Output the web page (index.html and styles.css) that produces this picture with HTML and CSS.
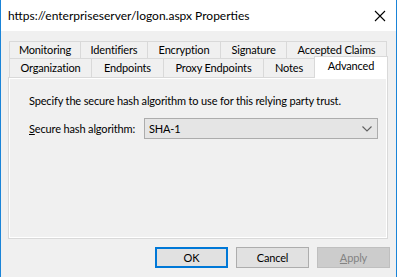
FILE: index.html
```html
<!DOCTYPE html>
<html lang="en">
<head>
  <meta charset="UTF-8">
  <meta name="viewport" content="width=device-width, initial-scale=1.0">
  <title>Properties</title>
  <link rel="stylesheet" href="styles.css">
</head>
<body>
  <div class="dialog">
    <header class="titlebar">
      <span class="title">https://enterpriseserver/logon.aspx Properties</span>
      <button class="close" aria-label="Close">
        <svg width="12" height="12" viewBox="0 0 12 12">
          <path d="M1 1 L11 11 M11 1 L1 11" stroke="#000" stroke-width="1.1" fill="none"/>
        </svg>
      </button>
    </header>

    <div class="content">
      <div class="tabs">
        <div class="tab-row back">
          <div class="tab tab-monitoring">Monitoring</div>
          <div class="tab tab-identifiers">Identifiers</div>
          <div class="tab tab-encryption">Encryption</div>
          <div class="tab tab-signature">Signature</div>
          <div class="tab tab-claims">Accepted Claims</div>
        </div>
        <div class="tab-row front">
          <div class="tab tab-organization">Organization</div>
          <div class="tab tab-endpoints">Endpoints</div>
          <div class="tab tab-proxy">Proxy Endpoints</div>
          <div class="tab tab-notes">Notes</div>
          <div class="tab tab-advanced active">Advanced</div>
        </div>
      </div>

      <div class="panel">
        <p class="hint">Specify the secure hash algorithm to use for this relying party trust.</p>
        <div class="field">
          <label class="field-label"><u>S</u>ecure hash algorithm:</label>
          <div class="select">
            <span>SHA-1</span>
            <svg width="10" height="6" viewBox="0 0 10 6">
              <path d="M0.5 0.5 L5 5 L9.5 0.5" stroke="#606060" stroke-width="1.1" fill="none"/>
            </svg>
          </div>
        </div>
      </div>

      <div class="actions">
        <button class="btn default">OK</button>
        <button class="btn">Cancel</button>
        <button class="btn disabled"><u>A</u>pply</button>
      </div>
    </div>
  </div>
</body>
</html>
```

FILE: styles.css
```css
* {
  margin: 0;
  padding: 0;
  box-sizing: border-box;
  font-family: Lato, "Noto Sans", sans-serif;
}

body {
  background-color: #f0f0f0;
  color: #000;
  font-size: 11px;
  letter-spacing: -0.15px;
}

.dialog {
  width: 397px;
  height: 277px;
  background: #f0f0f0;
  border-left: 1px solid #1a84d8;
  border-right: 1px solid #1a84d8;
  display: flex;
  flex-direction: column;
}

.titlebar {
  height: 31px;
  background: #fff;
  display: flex;
  align-items: center;
  justify-content: space-between;
  padding-left: 7px;
}

.title {
  font-size: 12px;
  letter-spacing: 0;
  color: #000;
}

.close {
  width: 32px;
  height: 31px;
  border: none;
  background: none;
  display: flex;
  align-items: center;
  justify-content: center;
}

.content {
  flex: 1;
  padding: 10px 7px 0 7px;
  display: flex;
  flex-direction: column;
}

.tabs {
  margin-left: 1px;
}

.tab-row {
  display: flex;
}

.tab {
  border: 1px solid #d9d9d9;
  border-bottom: none;
  margin-left: -1px;
  text-align: center;
  background: #f0f0f0;
  white-space: nowrap;
}

.tab:first-child {
  margin-left: 0;
}

.back .tab {
  height: 17px;
  line-height: 16px;
}

.front .tab {
  height: 19px;
  line-height: 18px;
}

.tab.active {
  position: relative;
  z-index: 1;
  background: #fff;
  height: 22px;
  margin-top: -2px;
  margin-bottom: -1px;
  line-height: 18px;
}

.tab-monitoring { width: 72px; }
.tab-identifiers { width: 68px; }
.tab-encryption { width: 74px; }
.tab-signature { width: 67px; }
.tab-claims { width: 101px; }

.tab-organization { width: 83px; }
.tab-endpoints { width: 73px; }
.tab-proxy { width: 101px; }
.tab-notes { width: 52px; }
.tab-advanced { width: 74px; }

.panel {
  width: 380px;
  height: 162px;
  border: 1px solid #d9d9d9;
  box-shadow: inset 0 0 0 1px #fff;
  padding: 15px 0 0 20px;
}

.hint {
  line-height: 16px;
  white-space: nowrap;
}

.field {
  display: flex;
  align-items: center;
  margin-top: 9px;
}

.field-label {
  width: 115px;
  flex-shrink: 0;
  white-space: nowrap;
}

.select {
  width: 234px;
  height: 21px;
  flex-shrink: 0;
  background: #e5e5e5;
  border: 1px solid #acacac;
  display: flex;
  align-items: center;
  justify-content: space-between;
  padding: 0 5px 0 4px;
}

.actions {
  display: flex;
  justify-content: flex-end;
  gap: 8px;
  margin-top: 8px;
  margin-right: -1px;
}

.btn {
  width: 73px;
  height: 21px;
  background: #e1e1e1;
  border: 1px solid #adadad;
  font-size: 11px;
  letter-spacing: -0.15px;
  color: #000;
}

.btn.default {
  border: 2px solid #0078d7;
}

.btn.disabled {
  background: #cccccc;
  border-color: #bfbfbf;
  color: #838383;
}
```
